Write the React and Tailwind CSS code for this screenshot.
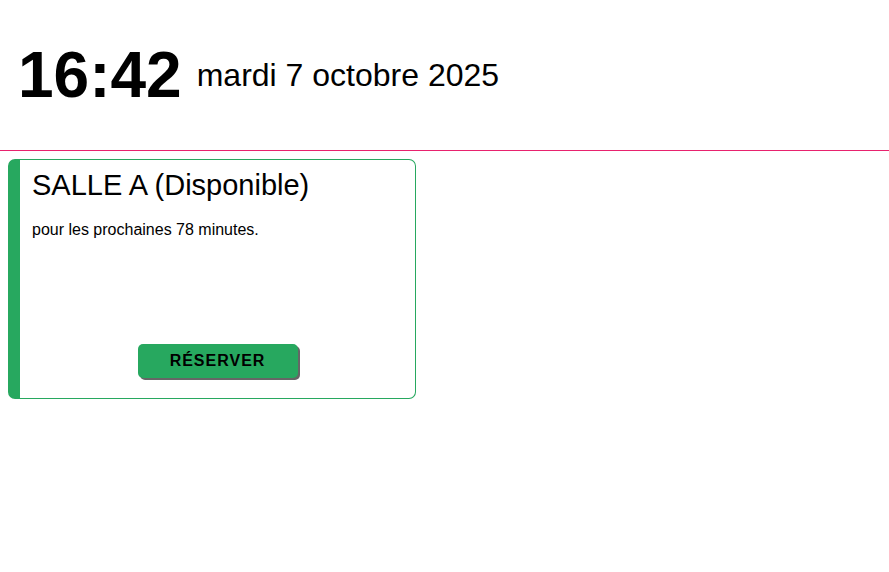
export default function App() {
  return (
    <div className="min-h-screen bg-white text-black font-['Liberation_Sans',Arial,sans-serif]">
      {/* en-tête */}
      <header className="h-[150px] px-[18px] pt-[43px]">
        <div className="flex items-center gap-[15px]">
          <span className="text-[64px] leading-none font-bold">16:42</span>
          <span className="text-[32px] leading-none">mardi 7 octobre 2025</span>
        </div>
      </header>
      <div className="h-px bg-[#e8226e]" />

      {/* salles */}
      <div className="p-2">
        <div className="w-[408px] h-[240px] flex flex-col border border-[#27a85f] border-l-[12px] rounded-[7px] pl-[12px] pr-4">
          <h2 className="text-[29px] leading-none mt-[11px]">SALLE A (Disponible)</h2>
          <p className="text-[16px] leading-none mt-[22px]">pour les prochaines 78 minutes.</p>
          <div className="flex-1" />
          <div className="flex justify-center mb-[20px] pl-[4px]">
            <button className="w-[160px] h-[34px] bg-[#27a85f] rounded-[5px] shadow-[2px_2px_0_#666] text-[16px] font-bold tracking-[1px] text-black">
              RÉSERVER
            </button>
          </div>
        </div>
      </div>
    </div>
  );
}
